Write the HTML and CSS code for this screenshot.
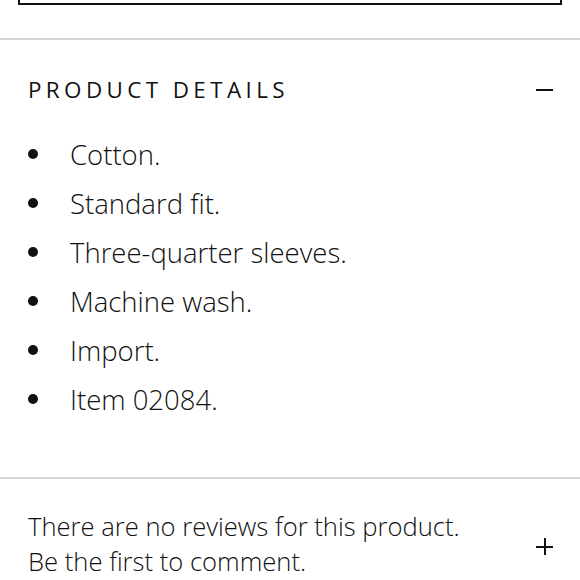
FILE: index.html
```html
<!DOCTYPE html>
<html>
<head>
<meta charset="utf-8">
<link rel="stylesheet" href="styles.css">
</head>
<body>
<div class="top-box"></div>
<div class="divider first"></div>
<section class="details">
  <div class="acc-head">
    <h2 class="acc-title">PRODUCT DETAILS</h2>
    <span class="minus"></span>
  </div>
  <ul class="feat">
    <li>Cotton.</li>
    <li>Standard fit.</li>
    <li>Three-quarter sleeves.</li>
    <li>Machine wash.</li>
    <li>Import.</li>
    <li>Item 02084.</li>
  </ul>
</section>
<div class="divider"></div>
<section class="reviews">
  <p class="rev-text">There are no reviews for this product.<br>Be the first to comment.</p>
  <span class="plus"></span>
</section>
</body>
</html>
```
FILE: styles.css
```css
html, body {
  margin: 0;
  padding: 0;
  background: #fff;
}
body {
  font-family: "Open Sans", Lato, sans-serif;
  font-weight: 300;
  color: #111;
  overflow: hidden;
}
.top-box {
  height: 30px;
  margin: -25px 18px 0 18px;
  border: 2px solid #111;
  box-sizing: border-box;
}
.divider {
  height: 2px;
  background: #d4d4d4;
}
.divider.first {
  margin-top: 33px;
}
.acc-head {
  display: flex;
  align-items: center;
  justify-content: space-between;
  padding: 35px 27px 0 28px;
  height: 30px;
}
.acc-title {
  margin: 0;
  font-weight: 400;
  font-size: 22.4px;
  letter-spacing: 4.4px;
  line-height: 30px;
}
.minus {
  width: 17px;
  height: 2px;
  background: #111;
}
.feat {
  list-style: none;
  margin: 35px 0 0 0;
  padding: 0 0 0 28px;
}
.feat li {
  position: relative;
  padding-left: 42px;
  font-size: 27.5px;
  height: 49px;
  line-height: 30px;
  white-space: nowrap;
}
.feat li::before {
  content: "";
  position: absolute;
  left: 0;
  top: 9px;
  width: 10px;
  height: 10px;
  border-radius: 50%;
  background: #111;
}
.details {
  height: 437px;
}
.reviews {
  display: flex;
  align-items: center;
  justify-content: space-between;
  padding: 30px 27px 0 28px;
}
.rev-text {
  margin: 0;
  font-size: 25.6px;
  line-height: 35px;
  white-space: nowrap;
}
.plus {
  position: relative;
  width: 17px;
  height: 17px;
  margin-top: 5px;
}
.plus::before, .plus::after {
  content: "";
  position: absolute;
  background: #111;
}
.plus::before {
  left: 0;
  top: 7.5px;
  width: 17px;
  height: 2px;
}
.plus::after {
  left: 7.5px;
  top: 0;
  width: 2px;
  height: 17px;
}
```
